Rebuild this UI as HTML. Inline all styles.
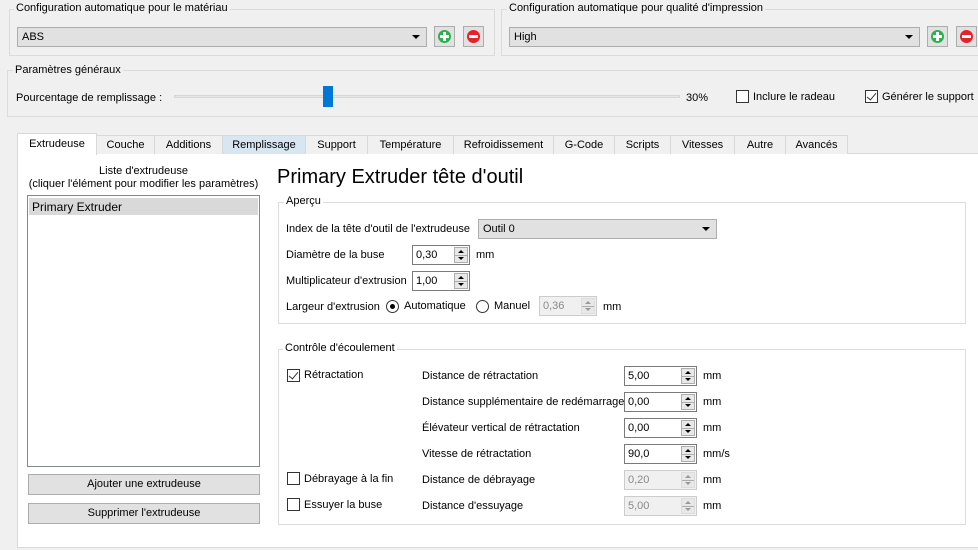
<!DOCTYPE html>
<html><head><meta charset="utf-8"><style>
*{box-sizing:border-box;margin:0;padding:0}
body{width:978px;height:550px;background:#f0f0f0;font-family:"Liberation Sans",Arial,sans-serif;font-size:11px;color:#000;position:relative;overflow:hidden}
.a{position:absolute;white-space:nowrap}
.gb{position:absolute;border:1px solid #dcdcdc}
.gt{position:absolute;background:#f0f0f0;padding:0 2px;white-space:nowrap;font-size:11px}
.wt{background:#fff}
.combo{position:absolute;background:#e1e1e1;border:1px solid #adadad;padding:3px 4px;height:20px}
.combo:after{content:"";position:absolute;right:6px;top:7px;border-left:4px solid transparent;border-right:4px solid transparent;border-top:4px solid #000}
.ib{position:absolute;width:21px;height:21px;background:#e1e1e1;border:1px solid #adadad}
.ib i{position:absolute;left:3px;top:3px;width:13px;height:13px;border-radius:50%}
.ib i:before,.ib i:after{content:"";position:absolute;background:#fff;left:2px;top:5px;width:9px;height:3px}
.ib i.p:after{left:5px;top:2px;width:3px;height:9px}
.cb{position:absolute;width:13px;height:13px;border:1px solid #333;background:#fff}
.cb.c:after{content:"";position:absolute;left:3px;top:0px;width:4px;height:8px;border-right:1.5px solid #333;border-bottom:1.5px solid #333;transform:rotate(40deg)}
.sp{position:absolute;height:20px;border:1px solid #7a7a7a;background:#fff;padding:3px 3px}
.sp.d{border-color:#ccc;background:#f0f0f0;color:#8a8a8a}
.sp b{position:absolute;right:1px;top:1px;width:14px;height:16px;border:1px solid #adadad;background:#e8e8e8}
.sp.d b{border-color:#ddd}
.sp b:before{content:"";position:absolute;left:3px;top:2px;border-left:3px solid transparent;border-right:3px solid transparent;border-bottom:3px solid #000}
.sp b:after{content:"";position:absolute;left:3px;top:9px;border-left:3px solid transparent;border-right:3px solid transparent;border-top:3px solid #000}
.sp.d b:before{border-bottom-color:#999}.sp.d b:after{border-top-color:#999}
.sp b i{position:absolute;left:0;right:0;top:7px;height:1px;background:#adadad}
.tab{position:absolute;top:135px;height:19px;border:1px solid #d9d9d9;border-bottom:none;background:#f0f0f0;text-align:center;padding-top:3px}
.btn{position:absolute;background:#e1e1e1;border:1px solid #adadad;text-align:center;padding-top:3px;height:21px}
.rd{position:absolute;width:13px;height:13px;border:1px solid #333;border-radius:50%;background:#fff}
</style></head><body>
<!-- group 1 -->
<div class="gb" style="left:9px;top:9px;width:486px;height:47px"></div>
<div class="gt" style="left:14px;top:2px">Configuration automatique pour le matériau</div>
<div class="combo" style="left:17px;top:27px;width:410px">ABS</div>
<div class="ib" style="left:434px;top:26px"><i class="p" style="background:#2bb24c"></i></div>
<div class="ib" style="left:463px;top:26px"><i style="background:#e8202a"></i></div>
<!-- group 2 -->
<div class="gb" style="left:501px;top:9px;width:490px;height:47px"></div>
<div class="gt" style="left:507px;top:2px">Configuration automatique pour qualité d'impression</div>
<div class="combo" style="left:509px;top:27px;width:411px">High</div>
<div class="ib" style="left:927px;top:26px"><i class="p" style="background:#2bb24c"></i></div>
<div class="ib" style="left:956px;top:26px"><i style="background:#e8202a"></i></div>
<!-- params -->
<div class="gb" style="left:7px;top:70px;width:985px;height:47px"></div>
<div class="gt" style="left:13px;top:64px">Paramètres généraux</div>
<div class="a" style="left:16px;top:92px">Pourcentage de remplissage :</div>
<div class="a" style="left:174px;top:95px;width:506px;height:3px;background:#e7e7e7;border:1px solid #d6d6d6"></div>
<div class="a" style="left:323px;top:86px;width:10px;height:21px;background:#0078d7"></div>
<div class="a" style="left:686px;top:92px">30%</div>
<div class="cb" style="left:736px;top:90px"></div>
<div class="a" style="left:753px;top:91px">Inclure le radeau</div>
<div class="cb c" style="left:865px;top:90px"></div>
<div class="a" style="left:882px;top:91px">Générer le support</div>
<!-- tabs -->
<div class="a wt" style="left:17px;top:153px;width:970px;height:395px;border:1px solid #d9d9d9"></div>
<div class="tab" style="left:96px;width:59px">Couche</div>
<div class="tab" style="left:154px;width:69px">Additions</div>
<div class="tab" style="left:222px;width:84px;background:#d8e6f2">Remplissage</div>
<div class="tab" style="left:305px;width:63px">Support</div>
<div class="tab" style="left:367px;width:87px">Température</div>
<div class="tab" style="left:453px;width:101px">Refroidissement</div>
<div class="tab" style="left:553px;width:62px">G-Code</div>
<div class="tab" style="left:614px;width:57px">Scripts</div>
<div class="tab" style="left:670px;width:65px">Vitesses</div>
<div class="tab" style="left:734px;width:52px">Autre</div>
<div class="tab" style="left:785px;width:63px">Avancés</div>
<div class="tab" style="left:17px;top:133px;width:80px;height:22px;background:#fff;padding-top:4px">Extrudeuse</div>
<!-- left -->
<div class="a" style="left:27px;top:165px;width:233px;text-align:center;line-height:13px">Liste d'extrudeuse<br>(cliquer l'élément pour modifier les paramètres)</div>
<div class="a" style="left:27px;top:195px;width:233px;height:272px;border:1px solid #828790;background:#fff"></div>
<div class="a" style="left:29px;top:198px;width:229px;height:17px;background:#d9d9d9;padding:2px 3px;font-size:12px">Primary Extruder</div>
<div class="btn" style="left:28px;top:474px;width:232px">Ajouter une extrudeuse</div>
<div class="btn" style="left:28px;top:503px;width:232px">Supprimer l'extrudeuse</div>
<!-- right -->
<div class="a" style="left:277px;top:166px;font-size:20px">Primary Extruder tête d'outil</div>
<div class="gb" style="left:278px;top:202px;width:688px;height:122px"></div>
<div class="gt wt" style="left:284px;top:195px">Aperçu</div>
<div class="a" style="left:286px;top:223px">Index de la tête d'outil de l'extrudeuse</div>
<div class="combo" style="left:478px;top:219px;width:239px">Outil 0</div>
<div class="a" style="left:286px;top:249px">Diamètre de la buse</div>
<div class="sp" style="left:412px;top:245px;width:58px">0,30<b><i></i></b></div>
<div class="a" style="left:476px;top:249px">mm</div>
<div class="a" style="left:286px;top:275px">Multiplicateur d'extrusion</div>
<div class="sp" style="left:412px;top:271px;width:58px">1,00<b><i></i></b></div>
<div class="a" style="left:286px;top:301px">Largeur d'extrusion</div>
<div class="rd" style="left:386px;top:300px"><span style="position:absolute;left:3px;top:3px;width:5px;height:5px;border-radius:50%;background:#000"></span></div>
<div class="a" style="left:404px;top:300px">Automatique</div>
<div class="rd" style="left:476px;top:300px"></div>
<div class="a" style="left:494px;top:300px">Manuel</div>
<div class="sp d" style="left:539px;top:296px;width:58px">0,36<b><i></i></b></div>
<div class="a" style="left:603px;top:301px">mm</div>

<div class="gb" style="left:278px;top:349px;width:688px;height:176px"></div>
<div class="gt wt" style="left:283px;top:342px">Contrôle d'écoulement</div>
<div class="cb c" style="left:287px;top:369px"></div>
<div class="a" style="left:304px;top:369px">Rétractation</div>
<div class="cb" style="left:287px;top:472px"></div>
<div class="a" style="left:304px;top:473px">Débrayage à la fin</div>
<div class="cb" style="left:287px;top:498px"></div>
<div class="a" style="left:304px;top:499px">Essuyer la buse</div>
<div class="a" style="left:422px;top:370px">Distance de rétractation</div>
<div class="a" style="left:422px;top:396px">Distance supplémentaire de redémarrage</div>
<div class="a" style="left:422px;top:422px">Élévateur vertical de rétractation</div>
<div class="a" style="left:422px;top:448px">Vitesse de rétractation</div>
<div class="a" style="left:422px;top:474px">Distance de débrayage</div>
<div class="a" style="left:422px;top:500px">Distance d'essuyage</div>
<div class="sp" style="left:624px;top:366px;width:73px">5,00<b><i></i></b></div>
<div class="sp" style="left:624px;top:392px;width:73px">0,00<b><i></i></b></div>
<div class="sp" style="left:624px;top:418px;width:73px">0,00<b><i></i></b></div>
<div class="sp" style="left:624px;top:444px;width:73px">90,0<b><i></i></b></div>
<div class="sp d" style="left:624px;top:470px;width:73px">0,20<b><i></i></b></div>
<div class="sp d" style="left:624px;top:496px;width:73px">5,00<b><i></i></b></div>
<div class="a" style="left:703px;top:370px">mm</div>
<div class="a" style="left:703px;top:396px">mm</div>
<div class="a" style="left:703px;top:422px">mm</div>
<div class="a" style="left:703px;top:448px">mm/s</div>
<div class="a" style="left:703px;top:474px">mm</div>
<div class="a" style="left:703px;top:500px">mm</div>
</body></html>
